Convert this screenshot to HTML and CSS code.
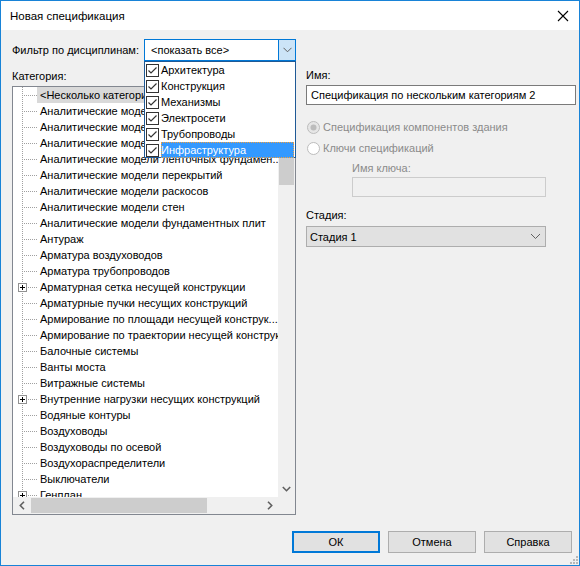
FILE: index.html
```html
<!DOCTYPE html>
<html lang="ru">
<head>
<meta charset="utf-8">
<title>Новая спецификация</title>
<link rel="stylesheet" href="styles.css">
</head>
<body>
<div class="window">
  <div class="titlebar">
    <span class="title">Новая спецификация</span>
    <svg class="close" width="12" height="12" viewBox="0 0 12 12"><path d="M1 1 L11 11 M11 1 L1 11" stroke="#000" stroke-width="1.1" fill="none"/></svg>
  </div>
  <div class="body">
    <div class="main">
      <div class="left">
        <div class="filter-row">
          <span class="lbl">Фильтр по дисциплинам:</span>
          <div class="combo">
            <span class="combo-text">&lt;показать все&gt;</span>
            <span class="combo-btn"><svg width="9" height="6" viewBox="0 0 9 6"><path d="M0.5 0.8 L4.5 4.8 L8.5 0.8" stroke="#606060" fill="none"/></svg></span>
            <div class="droplist">
              <div class="ditem"><span class="cb"><svg width="11" height="11" viewBox="0 0 11 11"><path d="M1.5 5.5 L4 8 L9.5 2.5" stroke="#333" stroke-width="1.2" fill="none"/></svg></span><span class="dtext">Архитектура</span></div>
              <div class="ditem"><span class="cb"><svg width="11" height="11" viewBox="0 0 11 11"><path d="M1.5 5.5 L4 8 L9.5 2.5" stroke="#333" stroke-width="1.2" fill="none"/></svg></span><span class="dtext">Конструкция</span></div>
              <div class="ditem"><span class="cb"><svg width="11" height="11" viewBox="0 0 11 11"><path d="M1.5 5.5 L4 8 L9.5 2.5" stroke="#333" stroke-width="1.2" fill="none"/></svg></span><span class="dtext">Механизмы</span></div>
              <div class="ditem"><span class="cb"><svg width="11" height="11" viewBox="0 0 11 11"><path d="M1.5 5.5 L4 8 L9.5 2.5" stroke="#333" stroke-width="1.2" fill="none"/></svg></span><span class="dtext">Электросети</span></div>
              <div class="ditem"><span class="cb"><svg width="11" height="11" viewBox="0 0 11 11"><path d="M1.5 5.5 L4 8 L9.5 2.5" stroke="#333" stroke-width="1.2" fill="none"/></svg></span><span class="dtext">Трубопроводы</span></div>
              <div class="ditem"><span class="cb"><svg width="11" height="11" viewBox="0 0 11 11"><path d="M1.5 5.5 L4 8 L9.5 2.5" stroke="#333" stroke-width="1.2" fill="none"/></svg></span><span class="dtext sel">Инфраструктура</span></div>
            </div>
          </div>
        </div>
        <div class="lbl cat-lbl">Категория:</div>
        <div class="tree">
          <div class="tree-content">
            <div class="row"><span class="conn"></span><span class="txt selected">&lt;Несколько категорий&gt;</span></div>
            <div class="row"><span class="conn"></span><span class="txt">Аналитические модели балок</span></div>
            <div class="row"><span class="conn"></span><span class="txt">Аналитические модели изолированных фундаментов</span></div>
            <div class="row"><span class="conn"></span><span class="txt">Аналитические модели колонн</span></div>
            <div class="row"><span class="conn"></span><span class="txt">Аналитические модели ленточных фундамен...</span></div>
            <div class="row"><span class="conn"></span><span class="txt">Аналитические модели перекрытий</span></div>
            <div class="row"><span class="conn"></span><span class="txt">Аналитические модели раскосов</span></div>
            <div class="row"><span class="conn"></span><span class="txt">Аналитические модели стен</span></div>
            <div class="row"><span class="conn"></span><span class="txt">Аналитические модели фундаментных плит</span></div>
            <div class="row"><span class="conn"></span><span class="txt">Антураж</span></div>
            <div class="row"><span class="conn"></span><span class="txt">Арматура воздуховодов</span></div>
            <div class="row"><span class="conn"></span><span class="txt">Арматура трубопроводов</span></div>
            <div class="row"><span class="conn plus"><i class="pbox"></i></span><span class="txt">Арматурная сетка несущей конструкции</span></div>
            <div class="row"><span class="conn"></span><span class="txt">Арматурные пучки несущих конструкций</span></div>
            <div class="row"><span class="conn"></span><span class="txt">Армирование по площади несущей конструк...</span></div>
            <div class="row"><span class="conn"></span><span class="txt">Армирование по траектории несущей конструкции</span></div>
            <div class="row"><span class="conn"></span><span class="txt">Балочные системы</span></div>
            <div class="row"><span class="conn"></span><span class="txt">Ванты моста</span></div>
            <div class="row"><span class="conn"></span><span class="txt">Витражные системы</span></div>
            <div class="row"><span class="conn plus"><i class="pbox"></i></span><span class="txt">Внутренние нагрузки несущих конструкций</span></div>
            <div class="row"><span class="conn"></span><span class="txt">Водяные контуры</span></div>
            <div class="row"><span class="conn"></span><span class="txt">Воздуховоды</span></div>
            <div class="row"><span class="conn"></span><span class="txt">Воздуховоды по осевой</span></div>
            <div class="row"><span class="conn"></span><span class="txt">Воздухораспределители</span></div>
            <div class="row"><span class="conn"></span><span class="txt">Выключатели</span></div>
            <div class="row"><span class="conn plus"><i class="pbox"></i></span><span class="txt">Генплан</span></div>
          </div>
          <div class="vscroll">
            <span class="sbtn"><svg width="9" height="6" viewBox="0 0 9 6"><path d="M0.8 5 L4.5 1.3 L8.2 5" stroke="#606060" stroke-width="1.6" fill="none"/></svg></span>
            <span class="vtrack"><span class="vthumb"></span></span>
            <span class="sbtn"><svg width="9" height="6" viewBox="0 0 9 6"><path d="M0.8 1 L4.5 4.7 L8.2 1" stroke="#606060" stroke-width="1.6" fill="none"/></svg></span>
          </div>
          <div class="hscroll">
            <span class="sbtn"><svg width="6" height="9" viewBox="0 0 6 9"><path d="M5 0.8 L1.3 4.5 L5 8.2" stroke="#606060" stroke-width="1.6" fill="none"/></svg></span>
            <span class="htrack"><span class="hthumb"></span></span>
            <span class="sbtn"><svg width="6" height="9" viewBox="0 0 6 9"><path d="M1 0.8 L4.7 4.5 L1 8.2" stroke="#606060" stroke-width="1.6" fill="none"/></svg></span>
          </div>
          <div class="corner"></div>
        </div>
      </div>
      <div class="right">
        <div class="lbl">Имя:</div>
        <div class="input name-input">Спецификация по нескольким категориям 2</div>
        <div class="radio r1">
          <svg width="13" height="13" viewBox="0 0 13 13"><circle cx="6.5" cy="6.5" r="6" fill="#e6e6e6" stroke="#bcbcbc"/><circle cx="6.5" cy="6.5" r="3" fill="#bcbcbc"/></svg>
          <span class="dis">Спецификация компонентов здания</span>
        </div>
        <div class="radio r2">
          <svg width="13" height="13" viewBox="0 0 13 13"><circle cx="6.5" cy="6.5" r="6" fill="#fff" stroke="#bcbcbc"/></svg>
          <span class="dis">Ключи спецификаций</span>
        </div>
        <div class="lbl dis key-lbl">Имя ключа:</div>
        <div class="input key-input"></div>
        <div class="lbl stage-lbl">Стадия:</div>
        <div class="select">
          <span>Стадия 1</span>
          <svg width="11" height="7" viewBox="0 0 11 7"><path d="M1 1 L5.5 5.5 L10 1" stroke="#606060" fill="none"/></svg>
        </div>
      </div>
    </div>
    <div class="buttons">
      <span class="btn default">ОК</span>
      <span class="btn">Отмена</span>
      <span class="btn">Справка</span>
    </div>
    <svg class="grip" width="10" height="10" viewBox="0 0 10 10">
      <rect x="8" y="2" width="2" height="2" fill="#b8b8b8"/>
      <rect x="5" y="5" width="2" height="2" fill="#b8b8b8"/>
      <rect x="8" y="5" width="2" height="2" fill="#b8b8b8"/>
      <rect x="2" y="8" width="2" height="2" fill="#b8b8b8"/>
      <rect x="5" y="8" width="2" height="2" fill="#b8b8b8"/>
      <rect x="8" y="8" width="2" height="2" fill="#b8b8b8"/>
    </svg>
  </div>
</div>
</body>
</html>
```
FILE: styles.css
```css
html, body {
  margin: 0;
  padding: 0;
  background: #ffffff;
}
body {
  font-family: "Liberation Sans", Arial, sans-serif;
  font-size: 11px;
  color: #000;
}
.window {
  width: 580px;
  height: 566px;
  box-sizing: border-box;
  border: 1px solid #1883d7;
  display: flex;
  flex-direction: column;
  background: #f0f0f0;
}
.titlebar {
  height: 29px;
  flex: none;
  background: #fff;
  display: flex;
  align-items: center;
  justify-content: space-between;
  padding: 0 10px 0 9px;
}
.title {
  font-size: 11.5px;
}
.body {
  flex: 1;
  position: relative;
  padding: 9px 3px 0 11px;
  display: flex;
  flex-direction: column;
}
.main {
  display: flex;
  gap: 10px;
}
.left {
  width: 284px;
  display: flex;
  flex-direction: column;
}
.lbl {
  line-height: 14px;
  white-space: nowrap;
}
.filter-row {
  height: 22px;
  display: flex;
  align-items: center;
  justify-content: space-between;
}
.combo {
  position: relative;
  flex: none;
  width: 152px;
  height: 22px;
  box-sizing: border-box;
  border: 1px solid #0078d7;
  background: #fff;
  display: flex;
  align-items: center;
}
.combo-text {
  flex: 1;
  padding-left: 6px;
}
.combo-btn {
  width: 16px;
  align-self: stretch;
  background: #cce4f7;
  border-left: 1px solid #0078d7;
  display: flex;
  align-items: center;
  justify-content: center;
}
.droplist {
  position: absolute;
  left: -1px;
  top: 21px;
  width: 152px;
  height: 97px;
  box-sizing: border-box;
  border: 1px solid #1f5a96;
  background: #fff;
  z-index: 5;
  display: flex;
  flex-direction: column;
}
.ditem {
  height: 16px;
  display: flex;
  align-items: center;
}
.cb {
  width: 13px;
  height: 13px;
  box-sizing: border-box;
  border: 1px solid #333;
  margin-left: 1px;
  display: flex;
  align-items: center;
  justify-content: center;
  background: #fff;
}
.dtext {
  margin-left: 2px;
  flex: 1;
  margin-right: 1px;
  height: 16px;
  line-height: 16px;
  box-sizing: border-box;
}
.dtext.sel {
  background: #3399ff;
  color: #fff;
  outline: 1px dotted #f0a040;
  outline-offset: -1px;
}
.cat-lbl {
  margin-top: 8px;
}
.tree {
  margin-top: 3px;
  height: 429px;
  box-sizing: border-box;
  border: 1px solid #828790;
  background: #fff;
  display: grid;
  grid-template-columns: 1fr 17px;
  grid-template-rows: 1fr 17px;
  overflow: hidden;
}
.tree-content {
  overflow: hidden;
  min-width: 0;
}
.row {
  height: 16px;
  display: flex;
  align-items: center;
  white-space: nowrap;
}
.conn {
  flex: none;
  width: 24px;
  height: 16px;
  display: flex;
  align-items: center;
  background:
    repeating-linear-gradient(to bottom, #a0a0a0 0 1px, transparent 1px 2px) 9px 0 / 1px 100% no-repeat,
    repeating-linear-gradient(to right, #a0a0a0 0 1px, transparent 1px 2px) 11px 8px / 13px 1px no-repeat;
}
.conn.plus {
  background:
    repeating-linear-gradient(to bottom, #a0a0a0 0 1px, transparent 1px 2px) 9px 0 / 1px 100% no-repeat,
    repeating-linear-gradient(to right, #a0a0a0 0 1px, transparent 1px 2px) 15px 8px / 9px 1px no-repeat;
}
.pbox {
  display: block;
  width: 9px;
  height: 9px;
  box-sizing: border-box;
  margin-left: 5px;
  margin-top: 1px;
  border: 1px solid #919191;
  background:
    linear-gradient(#000, #000) center / 5px 1px no-repeat,
    linear-gradient(#000, #000) center / 1px 5px no-repeat,
    #fff;
}
.txt {
  padding: 0 3px;
  line-height: 16px;
}
.txt.selected {
  background: #d9d9d9;
}
.vscroll {
  background: #f0f0f0;
  display: flex;
  flex-direction: column;
}
.sbtn {
  flex: none;
  width: 17px;
  height: 17px;
  display: flex;
  align-items: center;
  justify-content: center;
}
.vtrack {
  flex: 1;
  padding: 0 1px;
}
.vthumb {
  display: block;
  margin-top: 54px;
  height: 27px;
  background: #cdcdcd;
}
.hscroll {
  background: #f0f0f0;
  display: flex;
}
.htrack {
  flex: 1;
  padding: 1px 0;
}
.hthumb {
  display: block;
  margin-left: 1px;
  width: 176px;
  height: 15px;
  background: #cdcdcd;
}
.corner {
  background: #f0f0f0;
}
.right {
  width: 270px;
  padding-top: 29px;
  display: flex;
  flex-direction: column;
}
.input {
  box-sizing: border-box;
  height: 20px;
  line-height: 18px;
  background: #fff;
  border: 1px solid #7a7a7a;
  padding-left: 4px;
  white-space: nowrap;
}
.name-input {
  margin-top: 3px;
  width: 270px;
}
.radio {
  height: 16px;
  display: flex;
  align-items: center;
  gap: 3px;
  padding-left: 1px;
}
.r1 {
  margin-top: 14px;
}
.r2 {
  margin-top: 5px;
}
.dis {
  color: #8b8b8b;
}
.key-lbl {
  margin-top: 5px;
  margin-left: 46px;
}
.key-input {
  margin-top: 2px;
  margin-left: 46px;
  width: 194px;
  background: #f0f0f0;
  border-color: #cccccc;
}
.stage-lbl {
  margin-top: 11px;
}
.select {
  margin-top: 4px;
  width: 240px;
  height: 21px;
  box-sizing: border-box;
  background: #e1e1e1;
  border: 1px solid #adadad;
  display: flex;
  align-items: center;
  justify-content: space-between;
  padding: 0 4px 0 3px;
}
.buttons {
  margin-top: 16px;
  display: flex;
  justify-content: flex-end;
  gap: 8px;
  padding-right: 4px;
}
.btn {
  width: 88px;
  height: 22px;
  box-sizing: border-box;
  background: #e1e1e1;
  border: 1px solid #adadad;
  display: flex;
  align-items: center;
  justify-content: center;
}
.btn.default {
  border: 2px solid #0078d7;
}
.grip {
  position: absolute;
  right: 1px;
  bottom: 1px;
}
```
